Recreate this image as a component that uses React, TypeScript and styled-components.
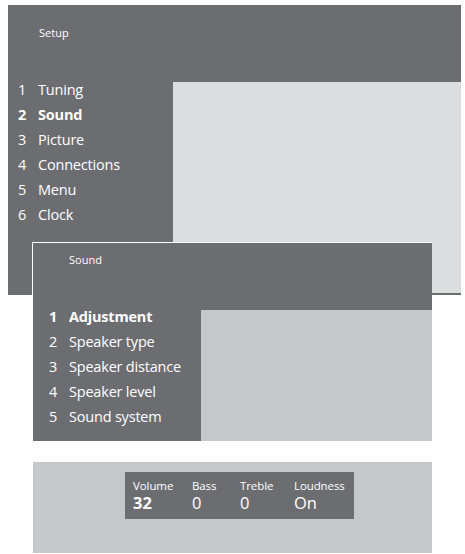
import React from 'react';
import styled, { createGlobalStyle } from 'styled-components';

const GlobalStyle = createGlobalStyle`
  html, body {
    margin: 0;
    padding: 0;
    background: #ffffff;
  }
  body {
    font-family: "Open Sans", "Noto Sans", sans-serif;
    color: #ffffff;
  }
`;

const DARK = '#6c6d71';

const Page = styled.div`
  width: 465px;
  height: 554px;
  padding-top: 5px;
  box-sizing: border-box;
  overflow: hidden;
`;

const SetupPanel = styled.section`
  margin-left: 8px;
  width: 453px;
  height: 290px;
  background: ${DARK};
  display: flex;
  flex-direction: column;
`;

const SubPanel = styled.section`
  position: relative;
  z-index: 1;
  margin: -53px 0 0 32px;
  width: 399px;
  height: 198px;
  background: ${DARK};
  border-top: 1px solid #ffffff;
  border-left: 1px solid #ffffff;
  display: flex;
  flex-direction: column;
`;

const Header = styled.div<{ $h: number; $pl: number; $pt: number }>`
  height: ${(p) => p.$h}px;
  padding: ${(p) => p.$pt}px 0 0 ${(p) => p.$pl}px;
  box-sizing: border-box;
  font-size: 11px;
  line-height: 14px;
  flex-shrink: 0;
`;

const Body = styled.div`
  flex: 1;
  display: flex;
`;

const Menu = styled.ol<{ $w: number; $pl: number }>`
  list-style: none;
  margin: 0;
  padding: 0 0 0 ${(p) => p.$pl}px;
  width: ${(p) => p.$w}px;
  box-sizing: border-box;
  flex-shrink: 0;
`;

const Item = styled.li<{ $active?: boolean }>`
  display: flex;
  height: 25px;
  align-items: center;
  font-size: 14.5px;
  letter-spacing: -0.2px;
  font-weight: ${(p) => (p.$active ? 700 : 400)};
  white-space: nowrap;
`;

const Num = styled.span`
  width: 20px;
  flex-shrink: 0;
`;

const Blank = styled.div<{ $bg: string; $mt: number; $mb: number }>`
  flex: 1;
  background: ${(p) => p.$bg};
  margin: ${(p) => p.$mt}px 0 ${(p) => p.$mb}px 0;
`;

const VolumePanel = styled.section`
  margin: 21px 0 0 33px;
  width: 399px;
  height: 91px;
  background: #c6c7c9;
  padding: 10px 0 0 92px;
  box-sizing: border-box;
`;

const Readout = styled.div`
  width: 229px;
  height: 47px;
  background: ${DARK};
  padding: 7px 0 0 8px;
  box-sizing: border-box;
  display: grid;
  grid-template-columns: 59px 48px 54px 1fr;
`;

const Cell = styled.div`
  display: flex;
  flex-direction: column;
`;

const Label = styled.span`
  font-size: 11.5px;
  line-height: 13px;
  letter-spacing: -0.1px;
`;

const Value = styled.span<{ $bold?: boolean }>`
  margin-top: 1px;
  font-size: 16.5px;
  line-height: 20px;
  font-weight: ${(p) => (p.$bold ? 700 : 400)};
`;

const setupItems = ['Tuning', 'Sound', 'Picture', 'Connections', 'Menu', 'Clock'];
const soundItems = ['Adjustment', 'Speaker type', 'Speaker distance', 'Speaker level', 'Sound system'];
const readings = [
  { label: 'Volume', value: '32', bold: true },
  { label: 'Bass', value: '0' },
  { label: 'Treble', value: '0' },
  { label: 'Loudness', value: 'On' },
];

export default function App() {
  return (
    <Page>
      <GlobalStyle />
      <SetupPanel>
        <Header $h={72} $pl={31} $pt={21}>Setup</Header>
        <Body>
          <Menu $w={165} $pl={10}>
            {setupItems.map((t, i) => (
              <Item key={t} $active={i === 1}>
                <Num>{i + 1}</Num>
                {t}
              </Item>
            ))}
          </Menu>
          <Blank $bg="#dcdddf" $mt={5} $mb={2} />
        </Body>
      </SetupPanel>

      <SubPanel>
        <Header $h={61} $pl={36} $pt={10}>Sound</Header>
        <Body>
          <Menu $w={168} $pl={16}>
            {soundItems.map((t, i) => (
              <Item key={t} $active={i === 0}>
                <Num>{i + 1}</Num>
                {t}
              </Item>
            ))}
          </Menu>
          <Blank $bg="#c6c7c9" $mt={6} $mb={0} />
        </Body>
      </SubPanel>

      <VolumePanel>
        <Readout>
          {readings.map((r) => (
            <Cell key={r.label}>
              <Label>{r.label}</Label>
              <Value $bold={r.bold}>{r.value}</Value>
            </Cell>
          ))}
        </Readout>
      </VolumePanel>
    </Page>
  );
}
